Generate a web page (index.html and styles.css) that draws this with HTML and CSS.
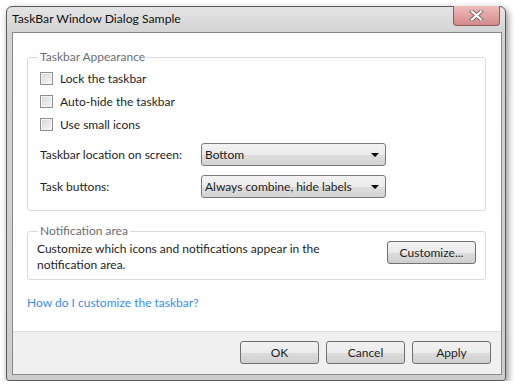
FILE: index.html
```html
<!DOCTYPE html>
<html>
<head>
  <meta name="viewport" content="width=device-width, initial-scale=1">
  <link rel="stylesheet" href="styles.css">
  <title>TaskBar Window Dialog Sample</title>
</head>
<body>

<div class="window">
  <div class="titlebar">
    <span class="title">TaskBar Window Dialog Sample</span>
    <button class="closeBtn">
      <svg width="15" height="11" viewBox="0 0 15 11">
        <path d="M3 1.5 L12 9.5 M12 1.5 L3 9.5" stroke="#7d6a6a" stroke-width="4" stroke-linecap="square"/>
        <path d="M3 1.5 L12 9.5 M12 1.5 L3 9.5" stroke="#ffffff" stroke-width="2.2" stroke-linecap="square"/>
      </svg>
    </button>
  </div>

  <div class="client">
    <div class="content">
      <fieldset class="group">
        <legend>Taskbar Appearance</legend>
        <label class="check"><span class="box"></span>Lock the taskbar</label>
        <label class="check"><span class="box"></span>Auto-hide the taskbar</label>
        <label class="check"><span class="box"></span>Use small icons</label>

        <div class="options">
          <span>Taskbar location on screen:</span>
          <div class="combo"><span>Bottom</span><i class="arrow"></i></div>
          <span>Task buttons:</span>
          <div class="combo"><span>Always combine, hide labels</span><i class="arrow"></i></div>
        </div>
      </fieldset>

      <fieldset class="group notify">
        <legend>Notification area</legend>
        <div class="notifyRow">
          <p>Customize which icons and notifications appear in the notification area.</p>
          <button class="btn customizeBtn">Customize...</button>
        </div>
      </fieldset>

      <a class="help" href="#">How do I customize the taskbar?</a>
    </div>

    <div class="footer">
      <button class="btn">OK</button>
      <button class="btn">Cancel</button>
      <button class="btn">Apply</button>
    </div>
  </div>
</div>

</body>
</html>
```

FILE: styles.css
```css
html, body {
  margin: 0;
  background-color: #ffffff;
}

body {
  font-family: 'Lato', 'Noto Sans', sans-serif;
  font-size: 12px;
  color: #1e1e1e;
}

.window {
  margin: 6px 0 0 6px;
  width: 490px;
  height: 368px;
  border: 1px solid #5a5a5a;
  border-radius: 6px 6px 3px 3px;
  background: linear-gradient(to bottom, #e4e4e4 0px, #d3d3d3 26px, #cdcdcd 100%);
  box-shadow: 2px 3px 7px rgba(0, 0, 0, 0.45);
  display: flex;
  flex-direction: column;
  padding: 0 3px 5px 5px;
}

.titlebar {
  height: 25px;
  display: flex;
  justify-content: space-between;
  align-items: flex-start;
}

.title {
  margin-top: 4px;
  line-height: 16px;
  font-size: 12.2px;
  color: #111111;
}

.closeBtn {
  margin: -1px 2px 0 0;
  width: 47px;
  height: 20px;
  border: 1px solid #8b5f60;
  border-top: 0;
  border-radius: 0 0 4px 4px;
  background: linear-gradient(to bottom, #efbcbc 0%, #e2a3a3 50%, #d28a8a 100%);
  display: flex;
  align-items: center;
  justify-content: center;
  padding: 0;
}

.client {
  flex: 1;
  border: 1px solid #8a8a8a;
  background-color: #ffffff;
  display: flex;
  flex-direction: column;
}

.content {
  flex: 1;
  padding: 16px 15px 0 14px;
  display: flex;
  flex-direction: column;
  align-items: flex-start;
}

.group {
  align-self: stretch;
  margin: 0;
  border: 1px solid #d5dbe0;
  border-radius: 3px;
  padding: 2px 12px 12px 12px;
}

.group legend {
  padding: 0 2px;
  margin-left: -2px;
  line-height: 16px;
  color: #6a6e73;
}

.check {
  display: flex;
  align-items: center;
  height: 23px;
  gap: 7px;
}

.box {
  width: 11px;
  height: 11px;
  border: 1px solid #8f8f8f;
  background: linear-gradient(135deg, #d6d6d6, #f7f7f7);
  box-shadow: inset 0 0 0 1px #f4f4f4;
}

.options {
  margin-top: 7px;
  display: grid;
  grid-template-columns: 161px 185px;
  row-gap: 9px;
  align-items: center;
}

.combo {
  height: 21px;
  border: 1px solid #7a7a7a;
  border-radius: 3px;
  background: linear-gradient(to bottom, #f3f3f3 0%, #ebebeb 50%, #dddddd 51%, #d4d4d4 100%);
  display: flex;
  align-items: center;
  justify-content: space-between;
  padding: 0 5px 0 3px;
}

.arrow {
  width: 0;
  height: 0;
  border-left: 4px solid transparent;
  border-right: 4px solid transparent;
  border-top: 4px solid #000000;
  margin-right: 1px;
}

.notify {
  margin-top: 12px;
  padding: 2px 9px 6px 9px;
}

.notify legend {
  margin-left: 1px;
}

.notifyRow {
  display: flex;
  justify-content: space-between;
  align-items: flex-start;
}

.notifyRow p {
  margin: 0;
  width: 300px;
  line-height: 16px;
}

.btn {
  font-family: inherit;
  font-size: 12px;
  color: #1e1e1e;
  height: 23px;
  width: 79px;
  border: 1px solid #707070;
  border-radius: 3px;
  background: linear-gradient(to bottom, #f2f2f2 0%, #ebebeb 50%, #dddddd 51%, #cfcfcf 100%);
  padding: 0;
}

.customizeBtn {
  width: 89px;
}

.help {
  margin-top: 15px;
  line-height: 16px;
  color: #3c8de6;
  text-decoration: none;
}

.footer {
  border-top: 1px solid #dfdfdf;
  background-color: #f0f0f0;
  padding: 9px 10px 10px 0;
  display: flex;
  justify-content: flex-end;
  gap: 7px;
}
```
